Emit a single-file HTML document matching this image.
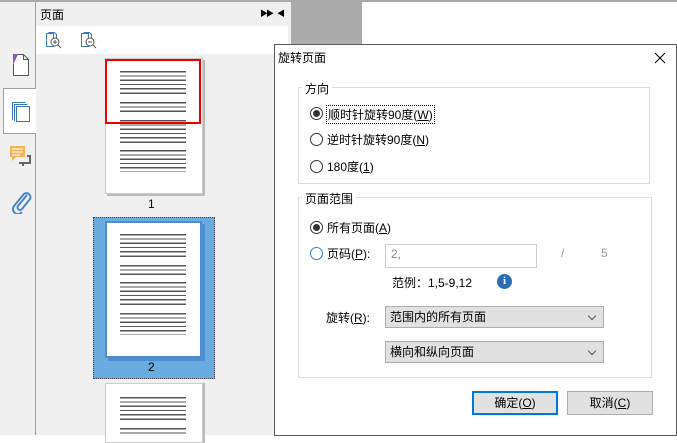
<!DOCTYPE html><html><head><meta charset="utf-8"><style>
*{margin:0;padding:0;box-sizing:border-box}
body{width:677px;height:435px;overflow:hidden;background:#fff;font-family:"Liberation Sans","Noto Sans CJK SC",sans-serif;font-size:12px;color:#000;position:relative}
.a{position:absolute}
.txt{background:repeating-linear-gradient(#555 0 1.3px,transparent 1.3px 4.3px)}
.radio{position:absolute;width:13px;height:13px;border:1px solid #333;border-radius:50%;background:#fff}
.radio.on::after{content:"";position:absolute;left:2px;top:2px;width:7px;height:7px;border-radius:50%;background:#333}
.sel{position:absolute;background:#e1e1e1;border:1px solid #adadad;padding-left:4px;line-height:20px;font-size:12px}
.sel::after{content:"";position:absolute;right:8px;top:6px;width:5px;height:5px;border-right:1px solid #555;border-bottom:1px solid #555;transform:rotate(45deg)}
.btn{position:absolute;background:#e1e1e1;border:1px solid #adadad;text-align:center;line-height:22px}
u{text-decoration:underline}
</style></head><body>
<div class="a" style="left:0;top:0;width:677px;height:2px;background:#aaa"></div>
<div class="a" style="left:0;top:2px;width:36px;height:433px;background:#f0f0f0;border-right:1px solid #a0a0a0"></div>
<div class="a" style="left:3px;top:88px;width:34px;height:46px;background:#fff;border:1px solid #a0a0a0;border-right:none"></div>
<svg class="a" style="left:10px;top:52px" width="22" height="26"><rect x="3" y="2" width="5" height="10" fill="#8b5aa8"/><path d="M3.5 12v11.5h15V7.5l-5-5H8" fill="#fff" stroke="#555"/><path d="M13.5 2.5v5h5" fill="none" stroke="#555"/></svg>
<svg class="a" style="left:10px;top:98px" width="22" height="26"><path d="M2.5 22V4.5h13M4.5 23V6.5h13" fill="none" stroke="#3a78b8"/><rect x="6.5" y="8.5" width="13" height="15" fill="#fff" stroke="#3a78b8"/></svg>
<svg class="a" style="left:9px;top:144px" width="24" height="24"><rect x="1" y="2" width="15" height="11" fill="#f2b45a"/><path d="M3 13v4l4-4z" fill="#f2b45a"/><path d="M3 5h11M3 8h11M3 11h8" stroke="#fff"/><path d="M18 12h3v7h-7v3M10 19h7" fill="none" stroke="#666" stroke-width="2"/></svg>
<svg class="a" style="left:10px;top:190px" width="22" height="24"><path d="M17 5 8 16a2.5 2.5 0 0 0 4 3l8-10a4 4 0 0 0-6-5L4 16a5 5 0 0 0 8 6" fill="none" stroke="#4a86c5" stroke-width="2"/></svg>
<div class="a" style="left:36px;top:2px;width:255px;height:433px;background:#f0f0f0"></div>
<div class="a" style="left:40px;top:6px;font-size:12px">页面</div>
<div class="a" style="left:260px;top:8px;font-size:8px;letter-spacing:-2px">▶▶</div>
<div class="a" style="left:277px;top:8px;font-size:8px">◀</div>
<div class="a" style="left:36px;top:26px;width:252px;height:28px;background:#fff"></div>
<svg class="a" style="left:44px;top:31px" width="20" height="18"><path d="M2.5 2.5h7v13h-7z M4.5 1.5h6l2 2v5" fill="#fff" stroke="#3a78b8"/><circle cx="11" cy="11" r="4" fill="#fff" stroke="#555"/><path d="M9 11h4M11 9v4M14 14l3 3" stroke="#555"/></svg>
<svg class="a" style="left:79px;top:31px" width="20" height="18"><path d="M2.5 2.5h7v13h-7z M4.5 1.5h6l2 2v5" fill="#fff" stroke="#3a78b8"/><circle cx="11" cy="11" r="4" fill="#fff" stroke="#555"/><path d="M9 11h4M14 14l3 3" stroke="#555"/></svg>
<div class="a" style="left:105px;top:58px;width:98px;height:136px;background:#fff;border:1px solid #ccc;box-shadow:2px 2px 0 #bbb"></div>
<div class="a txt" style="left:120px;top:71px;width:66px;height:26px"></div>
<div class="a txt" style="left:120px;top:102px;width:66px;height:11px"></div>
<div class="a txt" style="left:120px;top:120px;width:66px;height:26px"></div>
<div class="a txt" style="left:120px;top:150px;width:66px;height:22px"></div>
<div class="a" style="left:105px;top:59px;width:96px;height:65px;border:2px solid #e00"></div>
<div class="a" style="left:148px;top:197px">1</div>
<div class="a" style="left:93px;top:217px;width:122px;height:162px;background:#6aabe0;border:1px dotted #445"></div>
<div class="a" style="left:105px;top:221px;width:97px;height:137px;background:#fff;border:2px solid #4c8ed0;box-shadow:3px 3px 0 #4c8ed0"></div>
<div class="a txt" style="left:120px;top:234px;width:66px;height:26px"></div>
<div class="a txt" style="left:120px;top:265px;width:66px;height:11px"></div>
<div class="a txt" style="left:120px;top:282px;width:66px;height:26px"></div>
<div class="a txt" style="left:120px;top:313px;width:66px;height:22px"></div>
<div class="a" style="left:148px;top:360px">2</div>
<div class="a" style="left:105px;top:383px;width:98px;height:60px;background:#fff;border:1px solid #ccc;box-shadow:2px 0 0 #bbb"></div>
<div class="a txt" style="left:120px;top:397px;width:66px;height:26px"></div>
<div class="a txt" style="left:120px;top:428px;width:66px;height:7px"></div>
<div class="a" style="left:291px;top:2px;width:71px;height:433px;background:#ababab"></div>
<div class="a" style="left:362px;top:2px;width:315px;height:60px;background:linear-gradient(#fff 70%,#eee)"></div>
<div class="a" style="left:274px;top:44px;width:403px;height:392px;background:#fff;border:1px solid #5a5a5a"></div>
<div class="a" style="left:278px;top:49px;font-size:12px">旋转页面</div>
<svg class="a" style="left:654px;top:52px" width="12" height="12"><path d="M1 1l10 10M11 1 1 11" stroke="#000"/></svg>
<div class="a" style="left:298px;top:87px;width:352px;height:97px;border:1px solid #dcdcdc"></div>
<div class="a" style="left:302px;top:80px;background:#fff;padding:0 3px">方向</div>
<div class="radio on" style="left:310px;top:107px"></div>
<div class="a" style="left:326px;top:105px;border:1px dotted #000;padding:0 1px">顺时针旋转90度(<u>W</u>)</div>
<div class="radio" style="left:310px;top:133px"></div>
<div class="a" style="left:327px;top:131px">逆时针旋转90度(<u>N</u>)</div>
<div class="radio" style="left:310px;top:160px"></div>
<div class="a" style="left:327px;top:158px">180度(<u>1</u>)</div>
<div class="a" style="left:298px;top:197px;width:354px;height:181px;border:1px solid #dcdcdc"></div>
<div class="a" style="left:302px;top:190px;background:#fff;padding:0 3px">页面范围</div>
<div class="radio on" style="left:310px;top:221px"></div>
<div class="a" style="left:327px;top:219px">所有页面(<u>A</u>)</div>
<div class="radio" style="left:310px;top:247px;border-color:#2b7fd6"></div>
<div class="a" style="left:327px;top:245px">页码(<u>P</u>):</div>
<div class="a" style="left:385px;top:244px;width:152px;height:24px;border:1px solid #ccc;color:#888;padding:2px 5px">2,</div>
<div class="a" style="left:561px;top:246px;color:#999">/</div>
<div class="a" style="left:601px;top:246px;color:#999">5</div>
<div class="a" style="left:392px;top:274px">范例：1,5-9,12</div>
<div class="a" style="left:497px;top:274px;width:15px;height:15px;border-radius:50%;background:#2b6cb5;color:#fff;font-weight:bold;font-size:11px;text-align:center;line-height:15px;font-family:'Liberation Serif',serif">i</div>
<div class="a" style="left:326px;top:309px">旋转(<u>R</u>):</div>
<div class="sel" style="left:385px;top:306px;width:219px;height:22px">范围内的所有页面</div>
<div class="sel" style="left:385px;top:341px;width:219px;height:22px">横向和纵向页面</div>
<div class="btn" style="left:472px;top:391px;width:86px;height:24px;border:2px solid #0078d7;line-height:20px">确定(<u>O</u>)</div>
<div class="btn" style="left:567px;top:391px;width:86px;height:24px">取消(<u>C</u>)</div>
</body></html>
